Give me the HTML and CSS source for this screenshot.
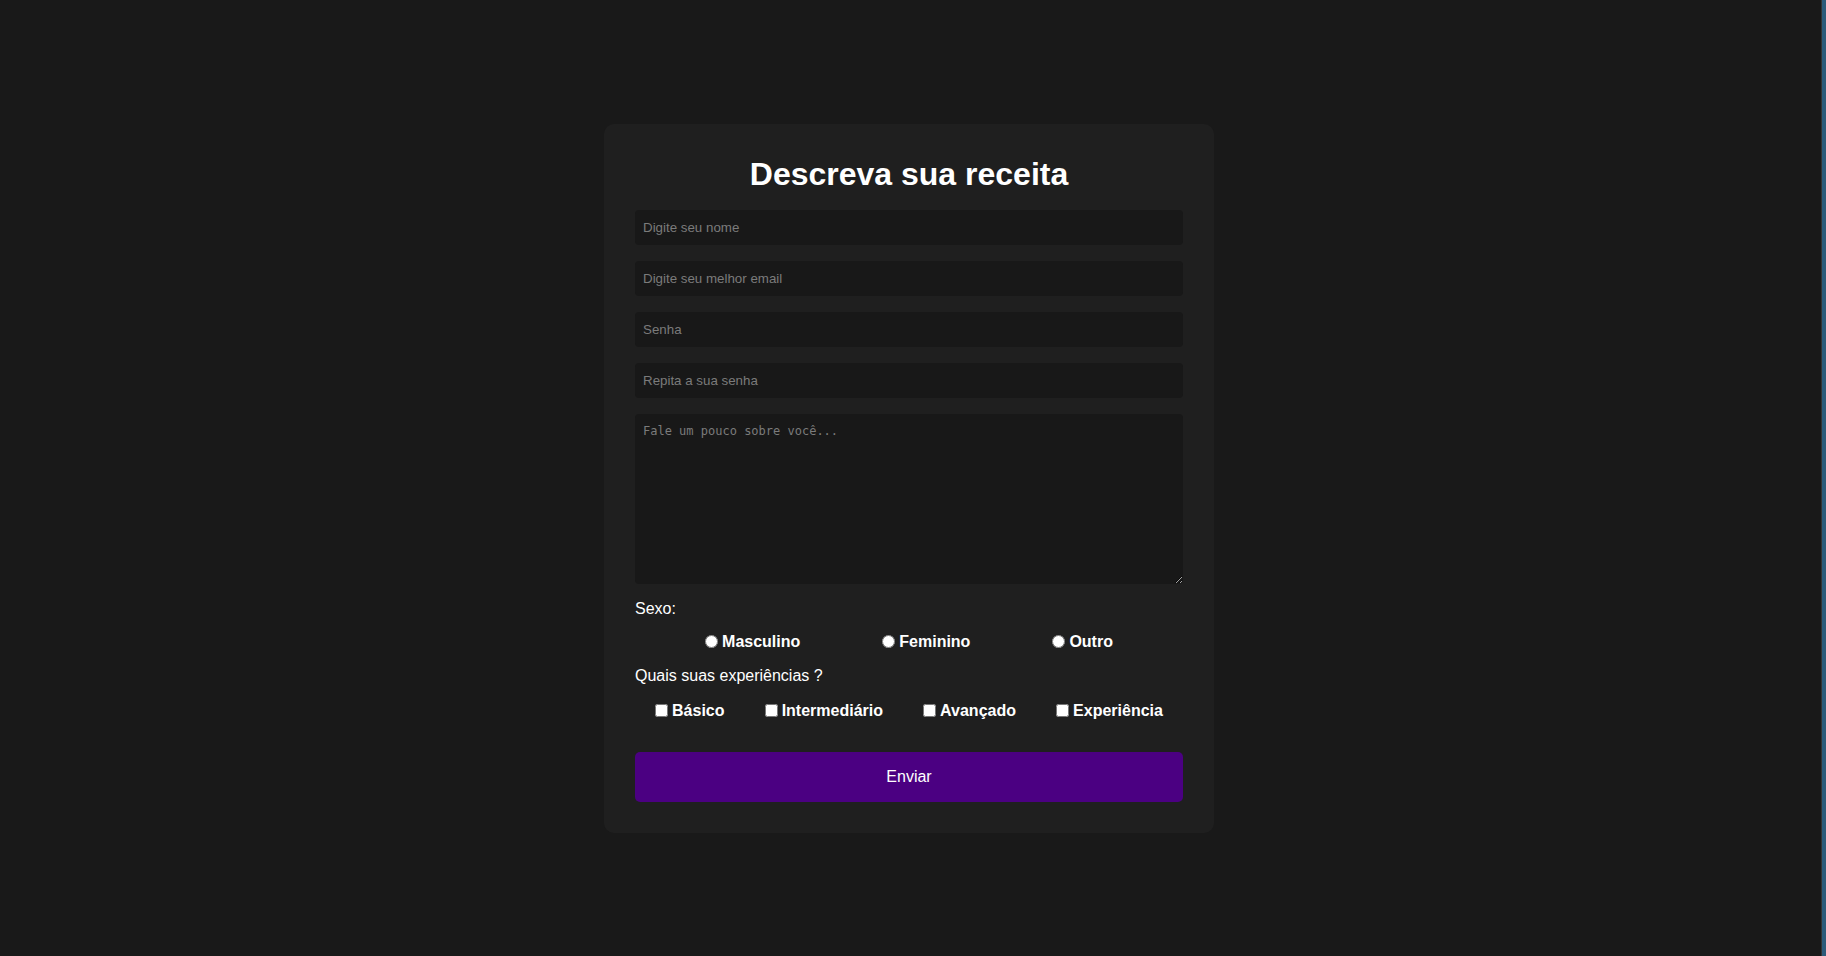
FILE: index.html
```html
<!DOCTYPE html>
<html lang="pt-BR">
<head>
<meta charset="utf-8">
<title>Descreva sua receita</title>
<link rel="stylesheet" href="styles.css">
</head>
<body>
<div class="page">
  <main class="main">
    <form class="card">
      <h1 class="title">Descreva sua receita</h1>
      <input class="field" type="text" placeholder="Digite seu nome">
      <input class="field" type="email" placeholder="Digite seu melhor email">
      <input class="field" type="password" placeholder="Senha">
      <input class="field" type="password" placeholder="Repita a sua senha">
      <textarea class="area" placeholder="Fale um pouco sobre você..."></textarea>
      <p class="label label-sexo">Sexo:</p>
      <div class="radio-row">
        <label class="opt"><input type="radio" name="sexo" class="mark">Masculino</label>
        <label class="opt"><input type="radio" name="sexo" class="mark">Feminino</label>
        <label class="opt"><input type="radio" name="sexo" class="mark">Outro</label>
      </div>
      <p class="label">Quais suas experiências ?</p>
      <div class="check-row">
        <label class="opt"><input type="checkbox" class="mark">Básico</label>
        <label class="opt"><input type="checkbox" class="mark">Intermediário</label>
        <label class="opt"><input type="checkbox" class="mark">Avançado</label>
        <label class="opt"><input type="checkbox" class="mark">Experiência</label>
      </div>
      <button class="submit" type="button">Enviar</button>
    </form>
  </main>
  <div class="edge"></div>
</div>
</body>
</html>
```
FILE: styles.css
```css
* { box-sizing: border-box; }

html, body {
  margin: 0;
  height: 100%;
  background: #191919;
  font-family: "Liberation Sans", Arial, sans-serif;
  color: #ffffff;
}

.page {
  display: flex;
  height: 100vh;
}

.main {
  flex: 1;
  display: flex;
  align-items: center;
  justify-content: center;
}

.edge {
  width: 5px;
  margin-left: 3px;
  border-left: 1px solid #333333;
  background: #2c5a79;
}

.card {
  width: 610px;
  padding: 32px 31px 31px;
  background: #1f1f1f;
  border-radius: 10px;
  display: flex;
  flex-direction: column;
}

.title {
  margin: 0 0 17px;
  font-size: 32px;
  line-height: 37px;
  font-weight: bold;
  text-align: center;
  color: #ffffff;
}

.field {
  display: block;
  width: 100%;
  height: 35px;
  margin: 0 0 16px;
  padding: 10px 8px;
  border: none;
  border-radius: 4px;
  background: #181818;
  color: #ffffff;
  font-family: "Liberation Sans", Arial, sans-serif;
  font-size: 13.333px;
  outline: none;
}

.field::placeholder,
.area::placeholder {
  color: #7b7b7b;
}

.area {
  display: block;
  width: 100%;
  height: 170px;
  margin: 0 0 16px;
  padding: 10px 8px;
  border: none;
  border-radius: 4px;
  background: #181818;
  color: #ffffff;
  font-family: "DejaVu Sans Mono", "Liberation Mono", monospace;
  font-size: 12px;
  outline: none;
}

.label {
  margin: 0 0 16px;
  font-size: 16px;
  line-height: 18px;
}

.label-sexo {
  margin-bottom: 14px;
}

.radio-row {
  display: flex;
  justify-content: center;
  gap: 82px;
  height: 19px;
  margin-bottom: 16px;
}

.check-row {
  display: flex;
  justify-content: space-around;
  height: 19px;
  margin-bottom: 32px;
}

.opt {
  display: flex;
  align-items: center;
  font-size: 16px;
  font-weight: bold;
  line-height: 19px;
}

.mark {
  width: 13px;
  height: 13px;
  margin: 0 4px 0 0;
}

.submit {
  width: 100%;
  height: 50px;
  border: none;
  border-radius: 5px;
  background: #4b0082;
  color: #ffffff;
  font-family: "Liberation Sans", Arial, sans-serif;
  font-size: 16px;
}
```
